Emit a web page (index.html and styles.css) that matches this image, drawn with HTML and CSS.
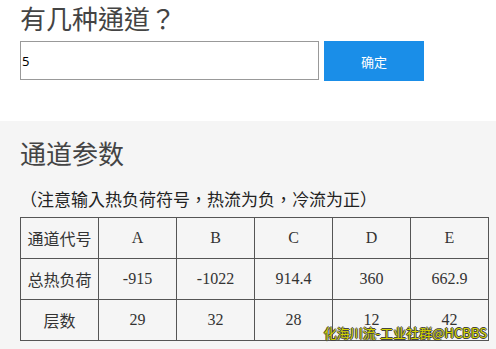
FILE: index.html
```html
<!DOCTYPE html>
<html lang="zh-CN">
<head>
  <meta charset="UTF-8">
  <meta name="viewport" content="width=device-width, initial-scale=1.0">
  <title>通道参数</title>
  <link rel="stylesheet" href="styles.css">
</head>
<body>
  <section class="count-panel">
    <h1 lang="zh-TW">有几种通道？</h1>
    <div class="count-form">
      <input type="text" class="count-input" value="5">
      <button class="button">确定</button>
    </div>
  </section>

  <section class="params-panel">
    <h2>通道参数</h2>
    <p class="hint" lang="zh-TW">（注意输入热负荷符号，热流为负，冷流为正）</p>
    <table class="params-table">
      <tr>
        <td>通道代号</td><td>A</td><td>B</td><td>C</td><td>D</td><td>E</td>
      </tr>
      <tr>
        <td>总热负荷</td><td>-915</td><td>-1022</td><td>914.4</td><td>360</td><td>662.9</td>
      </tr>
      <tr>
        <td>层数</td><td>29</td><td>32</td><td>28</td><td>12</td><td>42</td>
      </tr>
    </table>
  </section>

  <div class="watermark">化海川流-工业社群@HCBBS</div>
</body>
</html>
```

FILE: styles.css
```css
:root {
  --primary: #1a8ee8;
  --heading: #444444;
  --text: #333333;
  --border: #555555;
  --panel: #f5f5f5;
}

html, body {
  margin: 0;
  padding: 0;
  height: 100%;
}

body {
  font-family: "Noto Sans CJK SC", sans-serif;
  color: var(--text);
  background-color: var(--panel);
  position: relative;
  overflow: hidden;
  text-spacing-trim: space-all;
}

.count-panel {
  background-color: #ffffff;
  padding: 0 20px;
  height: 121px;
  box-sizing: border-box;
}

.count-panel h1 {
  margin: 0;
  padding-top: 2px;
  font-family: "Noto Sans CJK TC", "Noto Sans CJK SC", sans-serif;
  font-size: 26px;
  font-weight: 400;
  line-height: 32px;
  color: var(--heading);
  white-space: nowrap;
}

.count-form {
  display: flex;
  gap: 5px;
  margin-top: 7px;
}

.count-input {
  width: 299px;
  height: 39px;
  box-sizing: border-box;
  border: 1px solid #999999;
  padding: 0 1px;
  margin: 0;
  font-family: "Noto Sans", sans-serif;
  font-size: 13px;
  color: #000000;
  outline: none;
}

.button {
  width: 100px;
  height: 40px;
  border: none;
  margin: 0;
  background-color: var(--primary);
  color: #ffffff;
  font-family: "Noto Sans CJK SC", sans-serif;
  font-size: 13px;
}

.params-panel {
  padding: 16px 20px 0;
}

.params-panel h2 {
  margin: 0;
  font-size: 26px;
  font-weight: 400;
  line-height: 32px;
  color: var(--heading);
}

.hint {
  margin: 18px 0 0;
  font-family: "Noto Sans CJK TC", "Noto Sans CJK SC", sans-serif;
  font-size: 17px;
  line-height: 24px;
  color: #222222;
}

.params-table {
  margin-top: 6px;
  border-collapse: collapse;
  table-layout: fixed;
  width: 469px;
  font-family: "Liberation Serif", "Noto Sans CJK SC", serif;
  font-size: 16px;
  color: var(--text);
}

.params-table td {
  border: 1px solid var(--border);
  height: 40px;
  padding: 0;
  text-align: center;
  vertical-align: middle;
}

.watermark {
  position: absolute;
  right: 9px;
  bottom: 8px;
  font-family: "Noto Sans CJK SC", sans-serif;
  font-size: 13px;
  font-weight: 400;
  line-height: 16px;
  color: #d2d200;
  text-shadow: 1px 0 0 #444, -1px 0 0 #444, 0 1px 0 #444, 0 -1px 0 #444;
}
```
